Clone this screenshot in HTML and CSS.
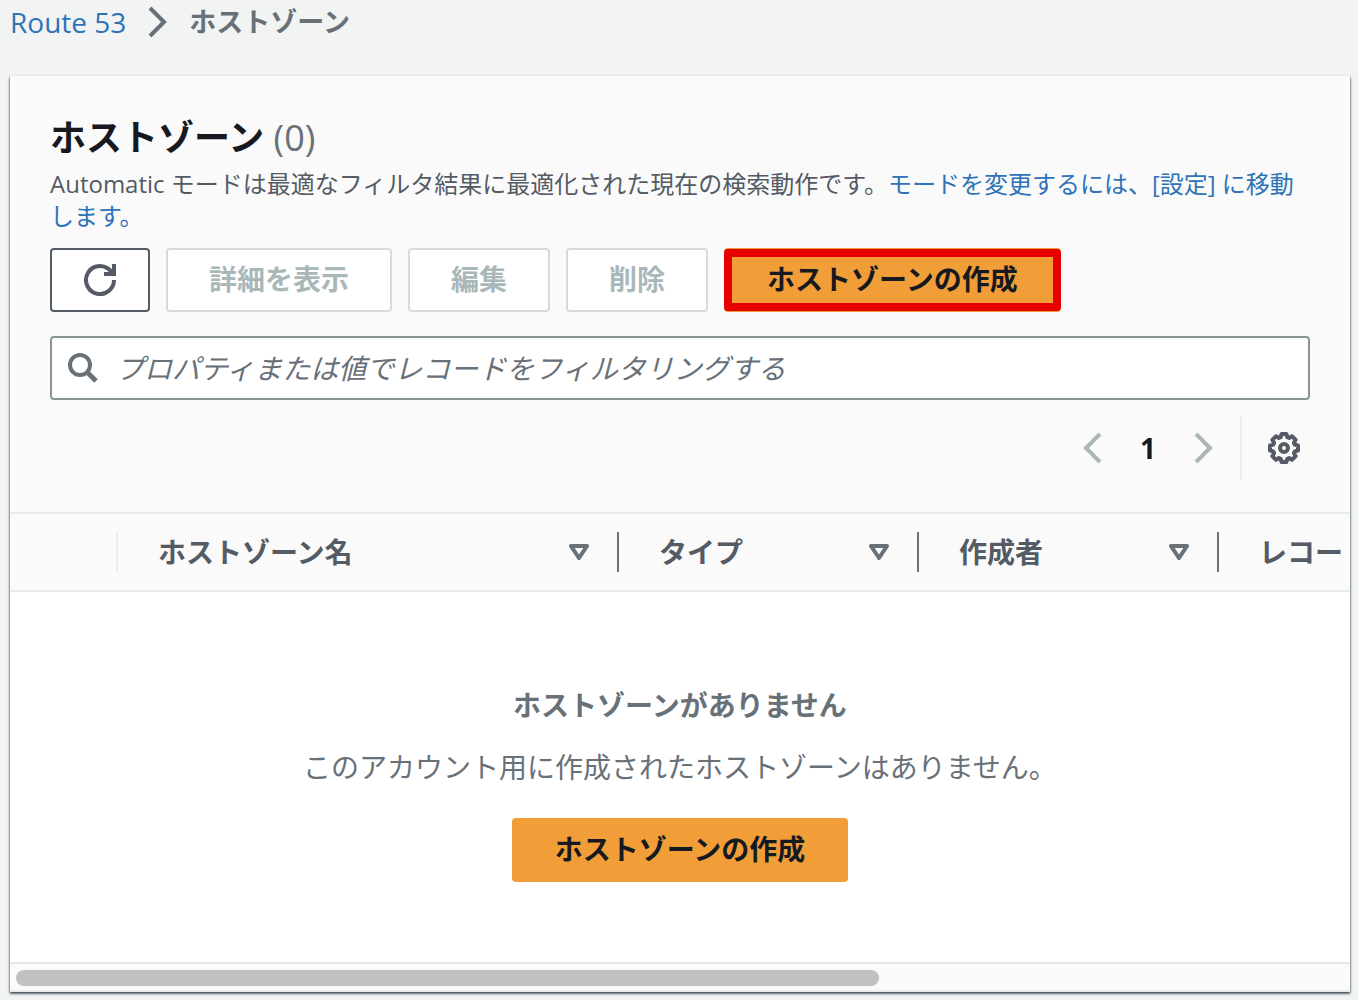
FILE: index.html
```html
<!DOCTYPE html>
<html lang="ja">
<head>
    <meta charset="UTF-8">
    <meta name="viewport" content="width=device-width, initial-scale=1.0">
    <title>Route 53 - ホストゾーン</title>
    <link rel="stylesheet" href="styles.css">
</head>
<body>
    <nav class="breadcrumb">
        <a href="#">Route 53</a>
        <svg class="crumb-arrow" width="20" height="32" viewBox="0 0 20 32" fill="none" stroke="#687078" stroke-width="4">
            <path d="M2 2l14 14L2 30"/>
        </svg>
        <span class="current">ホストゾーン</span>
    </nav>

    <main class="card">
        <header class="card-header">
            <h1>ホストゾーン <span class="count">(0)</span></h1>
            <p class="description">Automatic モードは最適なフィルタ結果に最適化された現在の検索動作です。<a href="#">モードを変更するには、[設定] に移動します。</a></p>

            <div class="actions">
                <button type="button" class="btn btn-refresh" aria-label="更新">
                    <svg width="36" height="36" viewBox="0 0 36 36" fill="none" stroke="#545b64" stroke-width="4">
                        <path d="M32 18A14 14 0 1 1 26 6.500Q29 8.500 31 12"/>
                        <path d="M32 2v10H22"/>
                    </svg>
                </button>
                <button type="button" class="btn" disabled>詳細を表示</button>
                <button type="button" class="btn" disabled>編集</button>
                <button type="button" class="btn" disabled>削除</button>
                <button type="button" class="btn btn-primary highlight">ホストゾーンの作成</button>
            </div>

            <div class="search">
                <svg width="32" height="32" viewBox="0 0 32 32" fill="none" stroke="#687078" stroke-width="4">
                    <circle cx="13" cy="13" r="10"/>
                    <path d="M20 20l9 9" stroke-width="5"/>
                </svg>
                <input type="text" aria-label="レコードをフィルタリング" placeholder="プロパティまたは値でレコードをフィルタリングする">
            </div>

            <div class="tools">
                <div class="pagination">
                    <button type="button" class="icon-btn" aria-label="前へ" disabled>
                        <svg width="20" height="32" viewBox="0 0 20 32" fill="none" stroke="#aab7b8" stroke-width="4">
                            <path d="M18 2L4 16l14 14"/>
                        </svg>
                    </button>
                    <button type="button" class="icon-btn page">1</button>
                    <button type="button" class="icon-btn" aria-label="次へ" disabled>
                        <svg width="20" height="32" viewBox="0 0 20 32" fill="none" stroke="#aab7b8" stroke-width="4">
                            <path d="M2 2l14 14L2 30"/>
                        </svg>
                    </button>
                </div>
                <div class="settings">
                    <button type="button" class="icon-btn" aria-label="設定">
                        <svg width="32" height="32" viewBox="0 0 32 32" fill="none" stroke="#545b64" stroke-width="4" stroke-linejoin="round">
                            <path d="M13.5 2h5l.8 3.200 1.800.8 2.900-1.800 3.600 3.700-1.700 2.900.8 1.800 3.300.9v5l-3.300.9-.8 1.800 1.700 2.900-3.600 3.700-2.900-1.800-1.800.8-.8 3.200h-5l-.8-3.200-1.800-.8-2.900 1.800-3.600-3.700 1.700-2.900-.8-1.800L2 18.500v-5l3.300-.9.8-1.800-1.700-2.900L8 4.200 10.900 6l1.800-.8z"/>
                            <circle cx="16" cy="16" r="4"/>
                        </svg>
                    </button>
                </div>
            </div>
        </header>

        <div class="table-wrap">
            <table>
                <thead>
                    <tr>
                        <th class="col-select"><div class="cell light"></div></th>
                        <th class="col-name">
                            <div class="cell">ホストゾーン名
                                <svg width="20" height="16" viewBox="0 0 20 16" fill="none" stroke="#687078" stroke-width="4" stroke-linejoin="round"><path d="M2 2h16l-8 12z"/></svg>
                            </div>
                        </th>
                        <th class="col-type">
                            <div class="cell">タイプ
                                <svg width="20" height="16" viewBox="0 0 20 16" fill="none" stroke="#687078" stroke-width="4" stroke-linejoin="round"><path d="M2 2h16l-8 12z"/></svg>
                            </div>
                        </th>
                        <th class="col-type">
                            <div class="cell">作成者
                                <svg width="20" height="16" viewBox="0 0 20 16" fill="none" stroke="#687078" stroke-width="4" stroke-linejoin="round"><path d="M2 2h16l-8 12z"/></svg>
                            </div>
                        </th>
                        <th class="col-count"><div class="cell">レコード数</div></th>
                    </tr>
                </thead>
            </table>
        </div>

        <section class="empty">
            <h2>ホストゾーンがありません</h2>
            <p>このアカウント用に作成されたホストゾーンはありません。</p>
            <button type="button" class="btn btn-primary">ホストゾーンの作成</button>
        </section>

        <div class="scrollbar"><div class="thumb"></div></div>
    </main>
</body>
</html>
```

FILE: styles.css
```css
* {
    box-sizing: border-box;
}
body {
    margin: 0;
    padding: 0 8px 8px 10px;
    background: #f2f3f3;
    color: #545b64;
    font-family: "Open Sans", "Noto Sans CJK JP", sans-serif;
    font-size: 28px;
    line-height: 44px;
}
a {
    color: #2e73b8;
    text-decoration: none;
}
h1, h2, p {
    margin: 0;
}
svg {
    display: block;
    flex: none;
}
button, input {
    font: inherit;
    color: inherit;
}

/* Breadcrumb */
.breadcrumb {
    display: flex;
    align-items: center;
    height: 44px;
    margin-bottom: 32px;
}
.crumb-arrow {
    margin: 0 21px 0 22px;
}
.current {
    color: #687078;
    font-size: 27px;
    font-weight: 700;
}

/* Card */
.card {
    background: #fff;
    box-shadow: 0 -2px 0 #eaeded, 0 2px 2px rgba(0, 28, 36, 0.5), 1px 1px 2px rgba(0, 28, 36, 0.3), -1px 1px 2px rgba(0, 28, 36, 0.3);
}
.card-header {
    padding: 40px 40px 32px;
    background: #fafafa;
}
h1 {
    color: #16191f;
    font-size: 36px;
    line-height: 44px;
}
.count {
    color: #687078;
    font-weight: 400;
}
.description {
    margin-top: 8px;
    font-size: 24px;
    line-height: 32px;
}

/* Buttons */
.actions {
    display: flex;
    flex-wrap: wrap;
    gap: 16px;
    margin-top: 16px;
}
.btn {
    height: 64px;
    padding: 0 41px 2px;
    border: 2px solid #545b64;
    border-radius: 4px;
    background: #fff;
    font-weight: 700;
    line-height: 40px;
    cursor: pointer;
}
.btn:disabled {
    border-color: #d5dbdb;
    color: #aab7b8;
    cursor: default;
}
.btn-refresh {
    padding: 0 30px;
}
.btn-primary {
    border-color: #f19e39;
    background: #f19e39;
    color: #16191f;
}
.highlight {
    position: relative;
}
.highlight::after {
    content: "";
    position: absolute;
    inset: -1px -2px;
    border: 8px solid #e60000;
    border-radius: 4px;
}

/* Search */
.search {
    display: flex;
    align-items: center;
    gap: 17px;
    height: 64px;
    margin-top: 24px;
    padding: 0 15px;
    border: 2px solid #879596;
    border-radius: 4px;
    background: #fff;
}
.search input {
    flex: 1;
    min-width: 0;
    padding: 0;
    border: 0;
    outline: 0;
    background: none;
}
.search input::placeholder {
    color: #687078;
    font-style: italic;
}

/* Pagination and settings */
.tools {
    display: flex;
    justify-content: flex-end;
    height: 64px;
    margin-top: 16px;
}
.pagination {
    display: flex;
    align-items: center;
    gap: 36px;
    padding-right: 26px;
}
.icon-btn {
    padding: 0;
    border: 0;
    background: none;
    cursor: pointer;
}
.page {
    width: 20px;
    color: #16191f;
    font-weight: 700;
}
.settings {
    display: flex;
    align-items: center;
    padding: 0 10px 0 26px;
    border-left: 2px solid #eaeded;
}

/* Table */
.table-wrap {
    overflow: hidden;
    border-top: 2px solid #eaeded;
    border-bottom: 2px solid #eaeded;
    background: #fafafa;
}
table {
    width: 2060px;
    table-layout: fixed;
    border-collapse: collapse;
}
th {
    padding: 18px 0;
    text-align: left;
}
.col-select {
    width: 108px;
}
.col-name {
    width: 501px;
}
.col-type {
    width: 300px;
}
.cell {
    display: flex;
    align-items: center;
    justify-content: space-between;
    height: 40px;
    padding: 0 28px 0 40px;
    border-right: 2px solid #687078;
}
.light {
    border-color: #eaeded;
}

/* Empty state */
.empty {
    display: flex;
    flex-direction: column;
    align-items: center;
    padding: 91px 40px 80px;
    color: #687078;
    text-align: center;
}
.empty h2 {
    font-size: 28px;
}
.empty p {
    margin: 18px 0 29px;
}

.scrollbar {
    padding: 6px 6px 4px;
    border-top: 2px solid #e7e7e7;
    border-bottom: 2px solid #eaeded;
    background: #fafafa;
}
.thumb {
    width: 65%;
    height: 16px;
    border-radius: 8px;
    background: #c1c1c1;
}
```
